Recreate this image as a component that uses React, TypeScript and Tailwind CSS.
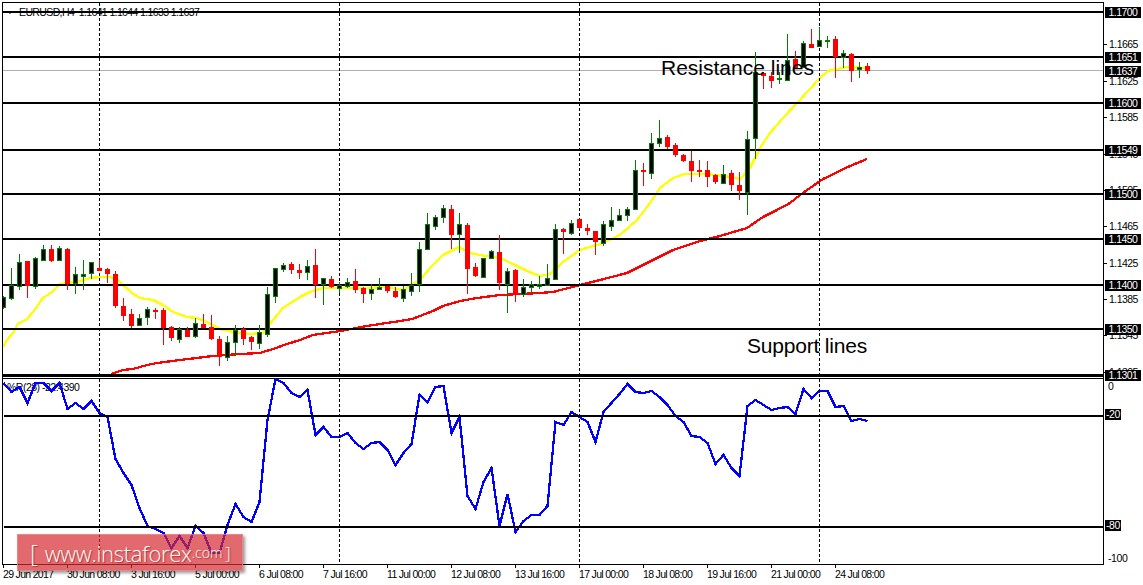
// wickTop, wickBottom, bodyTop, bodyBottom, bull (pixel rows of the chart)
const candles: number[][] = [
  [296, 309, 297, 307, 1], [268, 300, 285, 298, 1], [254, 290, 262, 286, 1], [261, 298, 261, 286, 0],
  [257, 289, 258, 286, 1], [245, 261, 249, 260, 1], [245, 262, 249, 261, 0], [246, 261, 248, 260, 1],
  [248, 290, 249, 284, 0], [267, 294, 274, 283, 1], [260, 290, 274, 276, 1], [262, 279, 262, 273, 1],
  [260, 271, 268, 271, 0], [268, 283, 269, 274, 0], [271, 308, 274, 306, 0], [298, 321, 306, 316, 0],
  [309, 328, 314, 326, 0], [314, 326, 318, 325, 1], [307, 325, 309, 317, 1], [308, 319, 310, 312, 0],
  [308, 345, 310, 328, 0], [326, 341, 327, 338, 0], [327, 343, 329, 339, 1], [327, 337, 330, 337, 0],
  [318, 338, 323, 336, 1], [314, 328, 324, 328, 0], [315, 340, 327, 339, 0], [336, 366, 339, 357, 0],
  [336, 361, 342, 357, 1], [325, 356, 330, 342, 1], [327, 345, 329, 339, 0], [336, 350, 337, 342, 0],
  [325, 349, 332, 343, 1], [287, 337, 294, 334, 1], [268, 303, 268, 296, 1], [263, 272, 265, 269, 1],
  [262, 274, 264, 270, 0], [264, 279, 270, 273, 0], [260, 280, 266, 272, 1], [249, 298, 265, 285, 0],
  [278, 305, 278, 284, 1], [276, 288, 279, 287, 0], [282, 293, 285, 288, 1], [278, 288, 282, 286, 1],
  [269, 293, 281, 290, 0], [287, 303, 288, 294, 0], [284, 300, 289, 293, 1], [278, 289, 287, 289, 1],
  [286, 293, 286, 291, 0], [287, 298, 291, 297, 0], [286, 302, 289, 298, 1], [273, 296, 285, 291, 1],
  [242, 292, 249, 284, 1], [213, 249, 224, 249, 1], [215, 230, 217, 226, 1], [205, 223, 208, 217, 1],
  [205, 249, 209, 235, 0], [213, 253, 224, 234, 1], [223, 294, 225, 269, 0], [263, 277, 267, 276, 0],
  [258, 277, 258, 277, 1], [250, 259, 251, 258, 1], [235, 290, 252, 283, 0], [268, 313, 271, 284, 1],
  [269, 302, 270, 294, 0], [279, 297, 287, 294, 1], [281, 294, 284, 287, 1], [276, 289, 284, 286, 1],
  [264, 286, 278, 285, 1], [224, 280, 229, 279, 1], [228, 254, 229, 232, 0], [220, 235, 223, 233, 1],
  [219, 229, 219, 228, 0], [224, 235, 228, 231, 0], [231, 255, 231, 242, 0], [221, 246, 224, 243, 1],
  [207, 231, 220, 226, 1], [209, 221, 215, 220, 1], [207, 221, 209, 215, 1], [160, 210, 170, 209, 1],
  [163, 186, 170, 172, 0], [133, 179, 143, 173, 1], [120, 147, 138, 143, 1], [135, 149, 137, 147, 0],
  [143, 157, 145, 155, 0], [154, 162, 155, 161, 0], [151, 182, 161, 171, 0], [160, 177, 170, 172, 0],
  [161, 187, 170, 177, 0], [174, 184, 175, 182, 0], [165, 184, 174, 183, 1], [170, 191, 173, 185, 0],
  [172, 200, 185, 191, 0], [131, 215, 139, 192, 1], [52, 159, 72, 138, 1], [72, 89, 73, 76, 0],
  [72, 88, 76, 81, 0], [72, 84, 78, 79, 1], [34, 80, 60, 80, 1], [51, 69, 59, 69, 0],
  [41, 68, 43, 67, 1], [29, 48, 44, 48, 0], [27, 46, 40, 46, 1], [36, 48, 40, 41, 1],
  [36, 78, 39, 57, 0], [50, 68, 53, 57, 1], [53, 82, 54, 71, 0], [62, 78, 67, 69, 1],
  [63, 74, 66, 71, 0],
]

const yellowLine =
  '3,347 7,340 13,333 18,324 27,319 33,312 43,298 52,292 60,284 77,282 90,278 100,277 110,277 117,279 123,285 132,293 140,298 153,300 163,305 173,312 187,317 197,318 207,322 220,329 233,332 250,334 263,333 273,320 283,308 300,297 310,292 323,288 340,288 367,288 387,287 403,290 420,280 430,268 443,255 459,247 470,253 480,255 500,258 513,264 527,271 540,276 550,274 563,262 580,250 590,247 600,244 620,235 637,220 650,203 660,188 673,178 685,174 703,174 717,175 730,177 740,179 750,168 760,148 770,133 783,118 798,102 820,78 828,71 847,67 867,68'

const redLine =
  '111,374 123,370 133,369 147,365 157,363 180,360 213,356 240,354 260,353 273,349 287,344 300,340 313,335 340,331 367,326 400,321 412,319 433,311 443,306 460,301 477,298 500,295 540,293 553,292 580,285 600,280 627,273 643,265 673,250 700,241 720,236 747,228 763,217 777,210 790,203 800,195 823,179 850,166 867,159'

const blueValues = [
  383, 392, 387, 403, 383, 383, 391, 383, 409, 403, 409, 401, 413, 417, 459, 473, 485, 508, 526, 529, 533, 548, 536, 548,
  526, 533, 553, 553, 525, 504, 517, 522, 502, 420, 379, 383, 393, 397, 390, 435, 427, 437, 437, 433, 443, 449, 443, 442,
  450, 465, 453, 444, 395, 402, 387, 386, 433, 417, 496, 509, 482, 468, 526, 494, 532, 521, 515, 515, 506, 422, 425, 412,
  417, 422, 442, 412, 403, 394, 384, 392, 393, 391, 397, 405, 416, 422, 436, 437, 443, 464, 455, 468, 476, 406, 400, 405,
  410, 408, 407, 414, 389, 398, 391, 391, 407, 406, 421, 419, 421,
]
const bluePoints = blueValues.map((y, i) => `${3.5 + 8 * i},${y}`).join(' ')

const levels = [12, 57, 103, 150, 194, 239, 285, 329]
const dashed = [99.5, 339.5, 579.5, 819.5]

const priceTicks = [
  ['1.1665', 44.5], ['1.1625', 81], ['1.1585', 117.5], ['1.1545', 154], ['1.1505', 190],
  ['1.1465', 226.5], ['1.1425', 263], ['1.1385', 299], ['1.1345', 335.5], ['1.1305', 372],
] as const
const priceBoxes = [
  ['1.1700', 12], ['1.1651', 57], ['1.1637', 71], ['1.1600', 103], ['1.1549', 150],
  ['1.1500', 194], ['1.1450', 239], ['1.1400', 285], ['1.1350', 329], ['1.1301', 375],
] as const

const times = [
  '29 Jun 2017', '30 Jun 08:00', '3 Jul 16:00', '5 Jul 00:00', '6 Jul 08:00', '7 Jul 16:00', '11 Jul 00:00',
  '12 Jul 08:00', '13 Jul 16:00', '17 Jul 00:00', '18 Jul 08:00', '19 Jul 16:00', '21 Jul 00:00', '24 Jul 08:00',
]

function Candle({ data, i }: { data: number[]; i: number }) {
  const [top, bottom, bodyTop, bodyBottom, bull] = data
  const x = 3.5 + 8 * i
  return (
    <g>
      <line x1={x} x2={x} y1={top} y2={bottom} stroke={bull ? '#008000' : '#ff0000'} />
      {bull ? (
        <rect x={x - 2} y={bodyTop + 0.5} width={4} height={bodyBottom - bodyTop} fill="#000" stroke="#008000" />
      ) : (
        <rect x={x - 2.5} y={bodyTop} width={5} height={bodyBottom - bodyTop} fill="#ff0000" />
      )}
    </g>
  )
}

export default function App() {
  return (
    <div className="relative w-[1143px] h-[585px] overflow-hidden bg-white pl-[2px] pt-[2px] font-['Liberation_Sans',sans-serif] text-[10.5px] leading-none text-black">
      <div className="flex">
        {/* Panels */}
        <div className="w-[1102px] border border-black">
          {/* Price chart */}
          <div className="relative h-[376px] border-b border-black">
            <div className="absolute left-[4px] top-[4px] flex items-center gap-[6px] tracking-[-0.62px] whitespace-pre">
              <span className="h-0 w-0 border-x-[3px] border-t-[3px] border-x-transparent border-t-black" />
              <span>EURUSD,H4  1.1641 1.1644 1.1633 1.1637</span>
            </div>
            <svg className="relative block" width={1100} height={375} viewBox="3 3 1100 375" shapeRendering="crispEdges">
              <line x1={3} x2={1103} y1={70.5} y2={70.5} stroke="#b0b0b0" />
              <polyline points={yellowLine} fill="none" stroke="#ffff00" strokeWidth={2.3} />
              <polyline points={redLine} fill="none" stroke="#ff0000" strokeWidth={2.3} />
              {levels.map((y) => (
                <line key={y} x1={3} x2={1103} y1={y} y2={y} stroke="#000" strokeWidth={2} />
              ))}
              <line x1={3} x2={1103} y1={375.5} y2={375.5} stroke="#000" strokeWidth={3} />
              {dashed.map((x) => (
                <line key={x} x1={x} x2={x} y1={3} y2={378} stroke="#000" strokeDasharray="3 2" />
              ))}
              {candles.map((c, i) => (
                <Candle key={i} data={c} i={i} />
              ))}
            </svg>
            <span className="absolute left-[658px] top-[53px] text-[21px] leading-6">Resistance lines</span>
            <span className="absolute left-[744px] top-[331px] text-[21px] leading-6 tracking-[-0.2px]">Support lines</span>
          </div>

          {/* Williams %R */}
          <div className="relative h-[185px]">
            <span className="absolute left-[4px] top-[3px] tracking-[-0.5px]">%R(28) -22.4390</span>
            <svg className="relative block" width={1100} height={185} viewBox="3 379 1100 185" shapeRendering="crispEdges">
              <polyline points={bluePoints} fill="none" stroke="#0000ff" strokeWidth={2.3} />
              <line x1={4} x2={1103} y1={416} y2={416} stroke="#000" strokeWidth={2} />
              <line x1={4} x2={1103} y1={527} y2={527} stroke="#000" strokeWidth={2} />
              {dashed.map((x) => (
                <line key={x} x1={x} x2={x} y1={379} y2={564} stroke="#000" strokeDasharray="3 2" />
              ))}
            </svg>
          </div>
        </div>

        {/* Price and %R scale */}
        <div className="relative h-[563px] w-[39px]">
          {priceTicks.map(([label, y]) => (
            <div key={label} className="absolute left-0 flex h-[10px] items-center" style={{ top: y - 7 }}>
              <span className="h-px w-[3px] bg-black" />
              <span className="ml-[2px] tracking-[-0.55px]">{label}</span>
            </div>
          ))}
          {priceBoxes.map(([label, y]) => (
            <div
              key={label}
              className="absolute left-[1px] flex h-[11px] w-[36px] items-center justify-center bg-black tracking-[-0.55px] text-white"
              style={{ top: y - 7.5 }}
            >
              {label}
            </div>
          ))}
          <span className="absolute left-[4px] top-[379px]">0</span>
          <span className="absolute left-[1px] top-[407px] flex h-[11px] w-[16px] items-center justify-center bg-black tracking-[-0.4px] text-white">
            -20
          </span>
          <span className="absolute left-[1px] top-[518px] flex h-[11px] w-[16px] items-center justify-center bg-black tracking-[-0.4px] text-white">
            -80
          </span>
          <span className="absolute left-[4px] top-[551px] tracking-[-0.4px]">-100</span>
        </div>
      </div>

      {/* Time scale */}
      <div className="ml-px flex">
        {times.map((t) => (
          <div key={t} className="w-[64px] shrink-0">
            <div className="h-[3px] w-px bg-black" />
            <div className="mt-px whitespace-nowrap tracking-[-0.68px]">{t}</div>
          </div>
        ))}
      </div>

      {/* Watermark */}
      <div className="absolute left-[17px] top-[534px] flex h-[37px] w-[226px] items-center border border-[#e89a9c]/60 bg-[#d62a2f]/70 pl-[12px] font-['Open_Sans',sans-serif] font-light text-white shadow-[2px_2px_3px_rgba(0,0,0,0.4)] [text-shadow:1px_1px_1px_rgba(120,0,0,0.5)]">
        <span className="text-[24px] leading-none">[</span>
        <span className="ml-[7px] text-[22px] leading-none tracking-[-0.3px]">www.instaforex</span>
        <span className="text-[14px] leading-none">.com</span>
        <span className="ml-[3px] text-[17px] leading-none">]</span>
      </div>
    </div>
  )
}
